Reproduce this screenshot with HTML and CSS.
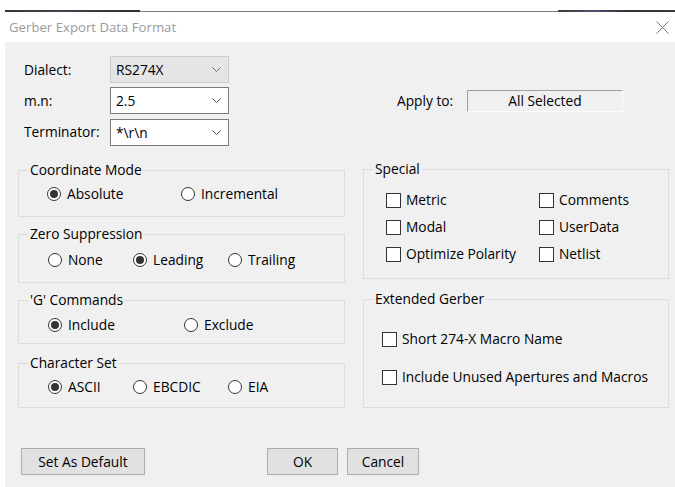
FILE: index.html
```html
<!DOCTYPE html>
<html lang="en">
<head>
<meta charset="utf-8">
<title>Gerber Export Data Format</title>
<link rel="stylesheet" href="styles.css">
</head>
<body>
<div class="screen">
  <div class="edge">
    <span class="seg seg-l"></span>
    <span class="seg seg-m"></span>
    <span class="seg seg-r"></span>
  </div>
  <div class="dialog">
    <div class="titlebar">
      <span class="title">Gerber Export Data Format</span>
      <svg class="close" width="13" height="13" viewBox="0 0 13 13" aria-hidden="true">
        <path d="M0.5 0.5 L12.5 12.5 M12.5 0.5 L0.5 12.5" stroke="#7a7a7a" stroke-width="1" fill="none"/>
      </svg>
    </div>

    <div class="client">
      <div class="top-form">
        <span class="lbl">Dialect:</span>
        <div class="combo combo-locked">
          <span>RS274X</span>
          <svg class="chev" width="9" height="5" viewBox="0 0 9 5"><polyline points="0.5,0.5 4.5,4.5 8.5,0.5" fill="none" stroke="#707070"/></svg>
        </div>
        <span class="spacer"></span>
        <span class="spacer"></span>
        <span class="spacer"></span>

        <span class="lbl">m.n:</span>
        <div class="combo">
          <span>2.5</span>
          <svg class="chev" width="9" height="5" viewBox="0 0 9 5"><polyline points="0.5,0.5 4.5,4.5 8.5,0.5" fill="none" stroke="#505050"/></svg>
        </div>
        <span class="spacer"></span>
        <span class="apply-lbl">Apply to:</span>
        <div class="apply-box">All Selected</div>

        <span class="lbl row-term">Terminator:</span>
        <div class="combo row-term">
          <span>*\r\n</span>
          <svg class="chev" width="9" height="5" viewBox="0 0 9 5"><polyline points="0.5,0.5 4.5,4.5 8.5,0.5" fill="none" stroke="#505050"/></svg>
        </div>
      </div>

      <div class="groups">
        <div class="col col-left">
          <fieldset class="grp g-coord">
            <legend>Coordinate Mode</legend>
            <div class="opts opts-2 inset-a">
              <span class="opt"><span class="radio on"></span>Absolute</span>
              <span class="opt"><span class="radio"></span>Incremental</span>
            </div>
          </fieldset>
          <fieldset class="grp g-zero">
            <legend>Zero Suppression</legend>
            <div class="opts opts-3 inset-b">
              <span class="opt"><span class="radio"></span>None</span>
              <span class="opt"><span class="radio on"></span>Leading</span>
              <span class="opt"><span class="radio"></span>Trailing</span>
            </div>
          </fieldset>
          <fieldset class="grp g-gcmd">
            <legend>'G' Commands</legend>
            <div class="opts opts-2w inset-b">
              <span class="opt"><span class="radio on"></span>Include</span>
              <span class="opt"><span class="radio"></span>Exclude</span>
            </div>
          </fieldset>
          <fieldset class="grp g-charset">
            <legend>Character Set</legend>
            <div class="opts opts-3 inset-b">
              <span class="opt"><span class="radio on"></span>ASCII</span>
              <span class="opt"><span class="radio"></span>EBCDIC</span>
              <span class="opt"><span class="radio"></span>EIA</span>
            </div>
          </fieldset>
        </div>

        <div class="col col-right">
          <fieldset class="grp g-special">
            <legend>Special</legend>
            <div class="checks">
              <span class="opt"><span class="check"></span>Metric</span>
              <span class="opt"><span class="check"></span>Comments</span>
              <span class="opt"><span class="check"></span>Modal</span>
              <span class="opt"><span class="check"></span>UserData</span>
              <span class="opt"><span class="check"></span>Optimize Polarity</span>
              <span class="opt"><span class="check"></span>Netlist</span>
            </div>
          </fieldset>
          <fieldset class="grp g-extended">
            <legend>Extended Gerber</legend>
            <div class="ext-list">
              <span class="opt"><span class="check"></span>Short 274-X Macro Name</span>
              <span class="opt"><span class="check"></span>Include Unused Apertures and Macros</span>
            </div>
          </fieldset>
        </div>
      </div>

      <div class="buttons">
        <button class="btn btn-default">Set As Default</button>
        <button class="btn btn-ok">OK</button>
        <button class="btn btn-cancel">Cancel</button>
      </div>
    </div>
  </div>
</div>
</body>
</html>
```

FILE: styles.css
```css
* {
  box-sizing: border-box;
}

html, body {
  margin: 0;
  padding: 0;
  background: #ffffff;
}

body {
  width: 675px;
  height: 487px;
  overflow: hidden;
  font-family: "Open Sans", "Noto Sans", "Liberation Sans", sans-serif;
  font-size: 13.75px;
  color: #000;
}

.screen {
  width: 675px;
  height: 487px;
}

/* window edge of the frame behind the dialog */
.edge {
  height: 12px;
  margin-left: 5px;
  display: flex;
  align-items: flex-end;
}

.seg {
  display: block;
}

.seg-l {
  width: 135px;
  height: 2px;
  background: linear-gradient(90deg, #3a3530, #4a4050 40%, #2f2f2f);
}

.seg-m {
  flex: 1;
  height: 1px;
  background: #7d7d7d;
}

.seg-r {
  width: 117px;
  height: 2px;
  background: linear-gradient(90deg, #3b3b3b, #5a4a70 30%, #333 60%, #3d3a36);
}

.dialog {
  margin-left: 5px;
}

.titlebar {
  height: 30px;
  display: flex;
  align-items: center;
  justify-content: space-between;
  padding: 0 6px 0 4px;
  background: #fff;
}

.title {
  color: #9a9a9a;
  font-size: 13.2px;
  line-height: 20px;
}

.close {
  display: block;
}

.client {
  height: 445px;
  background: #f0f0f0;
  overflow: hidden;
}

/* top label / combo block */
.top-form {
  display: grid;
  grid-template-columns: 86px 119px 168px 70px 156px;
  grid-template-rows: 27px 27px 27px;
  row-gap: 4px;
  padding: 14px 0 0 19px;
}

.lbl {
  display: flex;
  align-items: center;
  line-height: 20px;
}

.row-term {
  margin-top: 1px;
}

.combo {
  display: flex;
  align-items: center;
  justify-content: space-between;
  height: 27px;
  padding: 0 7px 0 5px;
  background: #fff;
  border: 1px solid #7a7a7a;
  line-height: 20px;
}

.combo-locked {
  background: #e5e5e5;
  border-color: #cdcdcd;
}

.chev {
  display: block;
}

.apply-lbl {
  display: flex;
  align-items: center;
  line-height: 20px;
}

.apply-box {
  align-self: center;
  height: 22px;
  line-height: 19px;
  text-align: center;
  border-top: 1px solid #a0a0a0;
  border-left: 1px solid #a0a0a0;
  border-bottom: 1px solid #fdfdfd;
  border-right: 1px solid #fdfdfd;
  background: #f0f0f0;
}

/* group boxes */
.groups {
  display: grid;
  grid-template-columns: 327px 306px;
  column-gap: 18px;
  align-items: start;
  margin-top: 15px;
  padding-left: 13px;
}

.col {
  display: flex;
  flex-direction: column;
}

.col-left {
  padding-top: 1px;
}

.grp {
  margin: 0;
  min-width: 0;
  padding-left: 0;
  padding-right: 0;
  border: 1px solid #dcdcdc;
}

.grp legend {
  margin-left: 9px;
  padding: 0 2px;
  line-height: 18px;
}

.g-coord   { padding-top: 5px; padding-bottom: 12px; }
.g-zero    { padding-top: 7px; padding-bottom: 12px; margin-top: 8px; }
.g-gcmd    { padding-top: 6px; padding-bottom: 8px;  margin-top: 8px; }
.g-charset { padding-top: 5px; padding-bottom: 10px; margin-top: 10px; }

.g-special  { padding-top: 12px; padding-bottom: 14px; }
.g-extended { padding-top: 21px; padding-bottom: 20px; margin-top: 11px; }

.opts {
  display: grid;
  grid-auto-flow: column;
}

.inset-a { padding-left: 28px; }
.inset-b { padding-left: 29px; }

.opts-2  { grid-template-columns: 134px auto; }
.opts-2w { grid-template-columns: 136px auto; }
.opts-3  { grid-template-columns: 85px 95px auto; }

.opt {
  display: flex;
  align-items: center;
  height: 20px;
  line-height: 20px;
  white-space: nowrap;
}

.radio {
  width: 14px;
  height: 14px;
  margin-right: 6px;
  border: 1px solid #333;
  border-radius: 50%;
  background: #fff;
  display: flex;
  align-items: center;
  justify-content: center;
  flex: none;
}

.radio.on::after {
  content: "";
  width: 8px;
  height: 8px;
  border-radius: 50%;
  background: #333;
}

.check {
  width: 15px;
  height: 15px;
  margin-right: 5px;
  border: 1px solid #333;
  background: #fff;
  flex: none;
}

.checks {
  display: grid;
  grid-template-columns: 153px auto;
  row-gap: 7px;
  padding-left: 22px;
}

.ext-list {
  display: flex;
  flex-direction: column;
  gap: 18px;
  padding-left: 18px;
}

/* bottom buttons */
.buttons {
  display: flex;
  margin-top: 40px;
  padding-left: 16px;
}

.btn {
  height: 27px;
  padding: 0;
  font-family: inherit;
  font-size: 13.75px;
  color: #000;
  background: #e1e1e1;
  border: 1px solid #adadad;
  line-height: 20px;
}

.btn-default { width: 124px; }
.btn-ok      { width: 71px; margin-left: 122px; }
.btn-cancel  { width: 72px; margin-left: 9px; }
```
